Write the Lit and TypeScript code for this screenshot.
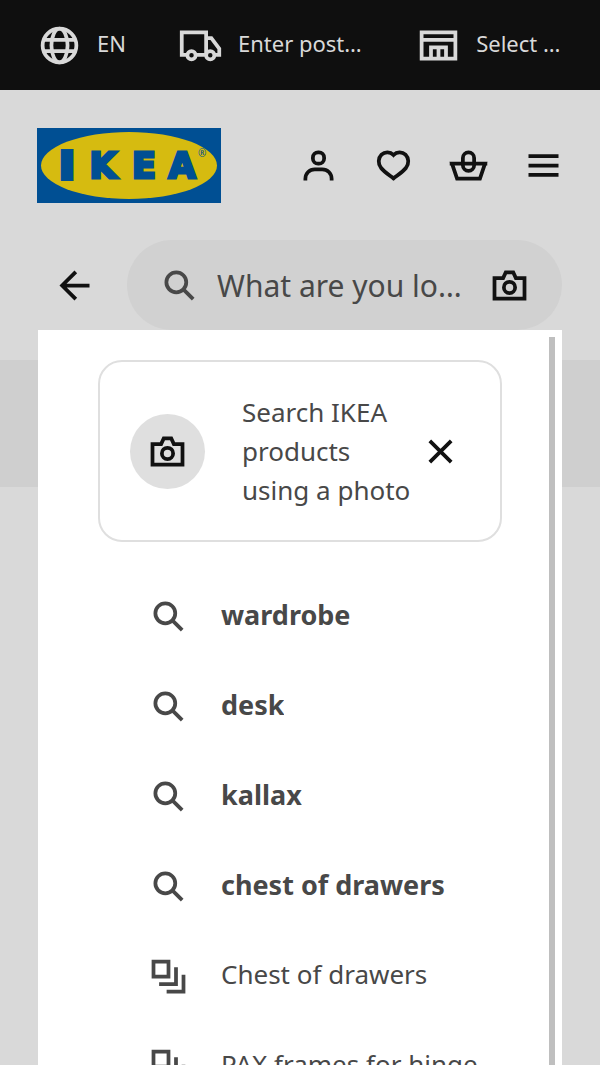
import { LitElement, html, svg, css, type SVGTemplateResult } from "lit";
import { customElement, property } from "lit/decorators.js";

const icons: Record<string, SVGTemplateResult> = {
  globe: svg`<circle cx="12" cy="12" r="9"/><ellipse cx="12" cy="12" rx="4.3" ry="9"/><path d="M3.6 9h16.8M3.6 15h16.8"/>`,
  truck: svg`<path d="M5 17H2V5h13v12H9.500"/><path d="M15 8h2.800L22 13.600V17h-2.500"/><circle cx="7.200" cy="17.200" r="2.200"/><circle cx="17.200" cy="17.200" r="2.200"/>`,
  store: svg`<path d="M3 5h18v14H3zM3 9h18M8 19v-6h8v6M12 13v6"/>`,
  user: svg`<rect x="9" y="5" width="6" height="6" rx="2.8"/><path d="M5 20v-1a5 5 0 0 1 5-5h4a5 5 0 0 1 5 5v1"/>`,
  heart: svg`<path d="M12 6.4C13.800 4.500 16.600 4.500 18.400 6.200c1.900 1.900 1.900 4.800.3 7-1.600 2.100-4.100 3.700-6.700 5.700-2.600-2-5.100-3.600-6.700-5.700-1.600-2.200-1.600-5.100.3-7C7.400 4.500 10.200 4.500 12 6.400z"/>`,
  basket: svg`<path d="M3.200 11h17.600l-2.700 8H5.900zM2 11h20"/><rect x="9" y="5" width="6" height="9.800" rx="3"/>`,
  menu: svg`<path d="M4 7h16M4 12h16M4 17h16"/>`,
  back: svg`<path d="M20 12H5.500M12.700 4.700 5.400 12l7.300 7.300"/>`,
  search: svg`<circle cx="10.300" cy="10.300" r="5.300"/><path d="m14.200 14.200 5.100 5.100"/>`,
  camera: svg`<path d="M4 8h4.600L10 5h4l1.400 3H20v11H4z"/><circle cx="12" cy="13" r="3"/>`,
  close: svg`<path d="m6.300 6.300 11.400 11.400M17.700 6.300 6.300 17.700"/>`,
  stack: svg`<path d="M4 4h8v8H4zM16 7v9H7M20 11v9h-9"/>`,
};

@customElement("ui-icon")
export class UiIcon extends LitElement {
  @property() name = "search";
  static styles = css`
    :host { display: block; flex: none; width: 45px; height: 45px; }
    svg { display: block; width: 100%; height: 100%; fill: none; stroke: currentColor; stroke-width: 2; }
  `;
  render() {
    return html`<svg viewBox="0 0 24 24" aria-hidden="true">${icons[this.name]}</svg>`;
  }
}

interface Suggestion { text: string; kind: "search" | "stack"; }

@customElement("app-root")
export class AppRoot extends LitElement {
  private suggestions: Suggestion[] = [
    { text: "wardrobe", kind: "search" },
    { text: "desk", kind: "search" },
    { text: "kallax", kind: "search" },
    { text: "chest of drawers", kind: "search" },
    { text: "Chest of drawers", kind: "stack" },
    { text: "PAX frames for hinge", kind: "stack" },
  ];

  static styles = css`
    :host {
      display: flex; flex-direction: column; height: 100vh; overflow: hidden;
      background: #d9d9d9; color: #484848;
      font-family: "Noto Sans", sans-serif; font-size: 26px; line-height: 39px;
    }
    * { box-sizing: border-box; }
    button { font: inherit; color: inherit; background: none; border: 0; padding: 0; margin: 0; text-align: left; cursor: pointer; }
    .topbar {
      flex: none; display: grid; grid-template-columns: auto 15fr 11fr; column-gap: 38px; align-items: center;
      height: 90px; padding: 0 37px; background: #0f0f0f; color: #d9d9d9; font-size: 22px;
    }
    .pref { display: flex; align-items: center; gap: 15px; min-width: 0; }
    .roomy { padding-right: 14px; }
    .label { overflow: hidden; text-overflow: ellipsis; white-space: nowrap; min-width: 0; padding-bottom: 3px; }
    .header { flex: none; display: flex; align-items: center; justify-content: space-between; height: 150px; padding: 0 34px 0 37px; color: #111; }
    .logo { display: block; width: 184px; height: 75px; }
    .logo svg { display: block; }
    .actions { display: flex; gap: 30px; }
    .searchrow { flex: none; display: flex; align-items: center; gap: 30px; padding: 0 38px 0 52px; color: #111; }
    .field { flex: 1; min-width: 0; display: flex; align-items: center; gap: 15px; height: 90px; padding: 0 30px; border-radius: 45px; background: #d1d1d1; }
    .glass { color: #484848; }
    .query {
      flex: 1; min-width: 0; font: inherit; font-size: 30px; line-height: 45px; height: 45px; padding: 0; margin-right: 10px;
      border: 0; outline: 0; background: none; color: #484848; text-overflow: ellipsis;
    }
    .query::placeholder { color: #484848; opacity: 1; }
    .stage { flex: 1; min-height: 0; display: grid; grid-template-rows: 100%; }
    .band { grid-area: 1 / 1; height: 127px; margin-top: 30px; background: #cfcfcf; }
    .panel { grid-area: 1 / 1; position: relative; margin: 0 38px; padding: 30px 60px 0; background: #fff; overflow: hidden; }
    .thumb { position: absolute; top: 7px; right: 7px; bottom: 0; width: 6px; background: #bfbfbf; }
    .card { display: flex; align-items: center; padding: 31px 30px 30px; border: 2px solid #dfdfdf; border-radius: 24px; }
    .badge { flex: none; display: grid; place-items: center; width: 75px; height: 75px; border-radius: 50%; background: #dfdfdf; color: #111; }
    .promo { flex: 1; min-width: 0; margin: 0; padding-left: 37px; }
    .dismiss { flex: none; color: #111; margin-right: 7px; }
    .list { list-style: none; margin: 29px 0 0; padding: 0; }
    .option { display: flex; align-items: center; gap: 30px; width: 100%; height: 90px; padding-left: 48px; }
    .option.bold { font-weight: 700; font-size: 27px; }
  `;

  render() {
    return html`
      <nav class="topbar" aria-label="Preferences">
        <button class="pref roomy"><ui-icon name="globe"></ui-icon><span class="label">EN</span></button>
        <button class="pref roomy"><ui-icon name="truck"></ui-icon><span class="label">Enter postal code</span></button>
        <button class="pref"><ui-icon name="store"></ui-icon><span class="label">Select store</span></button>
      </nav>
      <header class="header">
        <a class="logo" href="#" aria-label="IKEA">
          <svg width="184" height="75" viewBox="0 0 184 75">
            <rect width="184" height="75" fill="#004f93"/>
            <ellipse cx="92" cy="37.500" rx="88" ry="33.500" fill="#d6bb10"/>
            <g fill="#004f93" stroke="#004f93" stroke-width="3" text-anchor="middle" font-family="DejaVu Sans, sans-serif" font-weight="700" font-size="35">
              <text x="30" y="50" stroke-width="6">I</text><text x="66" y="50">K</text>
              <text x="107" y="50">E</text><text x="145" y="50">A</text>
            </g>
            <text x="161" y="29" fill="#004f93" font-family="Noto Sans, sans-serif" font-size="10">®</text>
          </svg>
        </a>
        <div class="actions">
          <button aria-label="Account"><ui-icon name="user"></ui-icon></button>
          <button aria-label="Favourites"><ui-icon name="heart"></ui-icon></button>
          <button aria-label="Shopping bag"><ui-icon name="basket"></ui-icon></button>
          <button aria-label="Menu"><ui-icon name="menu"></ui-icon></button>
        </div>
      </header>
      <form class="searchrow" role="search">
        <button type="button" aria-label="Back"><ui-icon name="back"></ui-icon></button>
        <div class="field">
          <ui-icon class="glass" name="search"></ui-icon>
          <input class="query" type="text" aria-label="Search" placeholder="What are you looking for?" />
          <button type="button" aria-label="Search with a photo"><ui-icon name="camera"></ui-icon></button>
        </div>
      </form>
      <main class="stage">
        <div class="band"></div>
        <section class="panel" aria-label="Search suggestions">
          <div class="card">
            <span class="badge"><ui-icon name="camera"></ui-icon></span>
            <p class="promo">Search IKEA products using a photo</p>
            <button class="dismiss" aria-label="Close"><ui-icon name="close"></ui-icon></button>
          </div>
          <ul class="list">
            ${this.suggestions.map(
              (s) => html`<li>
                <button class="option ${s.kind === "search" ? "bold" : ""}">
                  <ui-icon name=${s.kind}></ui-icon><span class="label">${s.text}</span>
                </button>
              </li>`
            )}
          </ul>
          <div class="thumb"></div>
        </section>
      </main>
    `;
  }
}
